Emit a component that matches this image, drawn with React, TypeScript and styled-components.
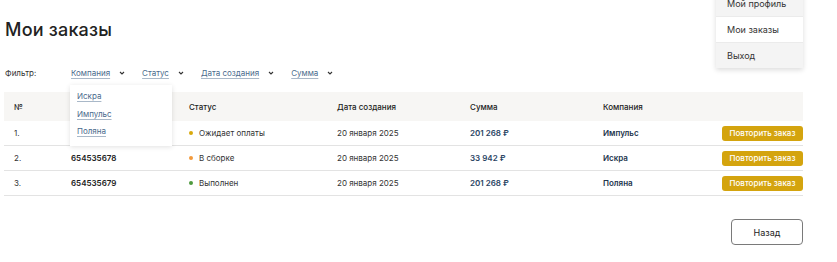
import React from 'react';
import styled, { createGlobalStyle } from 'styled-components';

const GlobalStyle = createGlobalStyle`
    html, body {
        margin: 0;
        padding: 0;
        background: #ffffff;
        font-family: "Inter", "Noto Sans", sans-serif;
        color: #222222;
    }
`;

interface Order {
    index: string;
    number: string;
    status: string;
    statusColor: string;
    date: string;
    sum: string;
    company: string;
}

const orders: Order[] = [
    { index: '1.', number: '654535677', status: 'Ожидает оплаты', statusColor: '#d8a90c', date: '20 января 2025', sum: '201 268 ₽', company: 'Импульс' },
    { index: '2.', number: '654535678', status: 'В сборке', statusColor: '#f39a3c', date: '20 января 2025', sum: '33 942 ₽', company: 'Искра' },
    { index: '3.', number: '654535679', status: 'Выполнен', statusColor: '#4e9a3e', date: '20 января 2025', sum: '201 268 ₽', company: 'Поляна' },
];

const Page = styled.div`
    position: relative;
    width: 837px;
    height: 262px;
    overflow: hidden;
    padding: 0 34px 0 4px;
    box-sizing: border-box;
`;

const Title = styled.h1`
    margin: 0;
    padding: 18px 0 0 1px;
    font-size: 18px;
    font-weight: 500;
    line-height: 24px;
    color: #222222;
    letter-spacing: 0.2px;
`;

const FilterBar = styled.div`
    display: flex;
    align-items: center;
    margin-top: 24px;
    height: 14px;
    font-size: 8px;
    position: relative;
`;

const FilterLabel = styled.span`
    width: 66px;
    padding-left: 1px;
    color: #333333;
`;

const FilterItem = styled.div`
    display: flex;
    align-items: center;
    gap: 9px;
    margin-right: 17px;
    color: #4a6a8c;
`;

const FilterText = styled.span`
    text-decoration: underline;
    text-decoration-color: #a9b8c8;
    text-underline-offset: 2px;
`;

const Chevron = () => (
    <svg width="6" height="4" viewBox="0 0 6 4">
        <path d="M1 1 L3 3 L5 1" stroke="#333" strokeWidth="1.1" fill="none" />
    </svg>
);

const CompanyMenu = styled.div`
    position: absolute;
    left: 66px;
    top: 19px;
    width: 102px;
    padding: 3px 0 5px;
    background: #ffffff;
    box-shadow: 0 1px 5px rgba(0, 0, 0, 0.12);
    z-index: 2;
    display: flex;
    flex-direction: column;
`;

const CompanyOption = styled.a`
    padding: 0 7px;
    height: 17.5px;
    line-height: 17.5px;
    font-size: 8px;
    color: #4a6a8c;
    text-decoration: underline;
    text-decoration-color: #a9b8c8;
    text-underline-offset: 2px;
`;

const Table = styled.div`
    margin-top: 12px;
    display: grid;
    grid-template-columns: 57px 118px 148px 133px 133px 1fr auto;
    font-size: 8px;
`;

const HeadCell = styled.div`
    background: #f7f6f4;
    height: 29px;
    display: flex;
    align-items: center;
    padding-left: 10px;
    font-weight: 500;
    color: #222222;
`;

const Cell = styled.div<{ $bold?: boolean; $color?: string; $last?: boolean }>`
    height: 24px;
    display: flex;
    align-items: center;
    padding-left: ${p => (p.$last ? '0' : '10px')};
    justify-content: ${p => (p.$last ? 'flex-end' : 'flex-start')};
    border-bottom: 1px solid #e3e3e3;
    font-weight: ${p => (p.$bold ? 600 : 400)};
    color: ${p => p.$color || '#333333'};
`;

const Dot = styled.span<{ $color: string }>`
    width: 4px;
    height: 4px;
    border-radius: 50%;
    background: ${p => p.$color};
    margin-right: 6px;
`;

const RepeatButton = styled.button`
    height: 15px;
    width: 81px;
    padding: 0;
    border: none;
    border-radius: 3px;
    background: #d4a40e;
    color: #ffffff;
    font-family: inherit;
    font-size: 8px;
    font-weight: 500;
    cursor: pointer;
`;

const Footer = styled.div`
    display: flex;
    justify-content: flex-end;
    margin-top: 23px;
`;

const BackButton = styled.button`
    width: 72px;
    height: 26px;
    border: 1px solid #7a7a7a;
    border-radius: 4px;
    background: #ffffff;
    font-family: inherit;
    font-size: 9px;
    color: #222222;
    cursor: pointer;
`;

const AccountMenu = styled.div`
    position: absolute;
    top: -9px;
    left: 716px;
    width: 87px;
    display: flex;
    flex-direction: column;
    box-shadow: 0 2px 5px rgba(0, 0, 0, 0.14);
    z-index: 3;
`;

const AccountItem = styled.div<{ $active?: boolean }>`
    height: 25px;
    line-height: 25px;
    padding-left: 11px;
    font-size: 9px;
    color: #333333;
    background: ${p => (p.$active ? '#ffffff' : '#f4f4f4')};
    border-bottom: 1px solid #ebebeb;
    &:last-child {
        border-bottom: none;
    }
`;

export default function App() {
    return (
        <Page>
            <GlobalStyle />
            <Title>Мои заказы</Title>
            <FilterBar>
                <FilterLabel>Фильтр:</FilterLabel>
                <FilterItem><FilterText>Компания</FilterText><Chevron /></FilterItem>
                <FilterItem><FilterText>Статус</FilterText><Chevron /></FilterItem>
                <FilterItem><FilterText>Дата создания</FilterText><Chevron /></FilterItem>
                <FilterItem><FilterText>Сумма</FilterText><Chevron /></FilterItem>
                <CompanyMenu>
                    <CompanyOption>Искра</CompanyOption>
                    <CompanyOption>Импульс</CompanyOption>
                    <CompanyOption>Поляна</CompanyOption>
                </CompanyMenu>
            </FilterBar>
            <Table>
                <HeadCell>№</HeadCell>
                <HeadCell></HeadCell>
                <HeadCell>Статус</HeadCell>
                <HeadCell>Дата создания</HeadCell>
                <HeadCell>Сумма</HeadCell>
                <HeadCell>Компания</HeadCell>
                <HeadCell></HeadCell>
                {orders.map(order => (
                    <React.Fragment key={order.number}>
                        <Cell>{order.index}</Cell>
                        <Cell $bold $color="#222222">{order.number}</Cell>
                        <Cell><Dot $color={order.statusColor} />{order.status}</Cell>
                        <Cell>{order.date}</Cell>
                        <Cell $bold $color="#2a4564">{order.sum}</Cell>
                        <Cell $bold $color="#22344c">{order.company}</Cell>
                        <Cell $last><RepeatButton>Повторить заказ</RepeatButton></Cell>
                    </React.Fragment>
                ))}
            </Table>
            <Footer>
                <BackButton>Назад</BackButton>
            </Footer>
            <AccountMenu>
                <AccountItem>Мой профиль</AccountItem>
                <AccountItem $active>Мои заказы</AccountItem>
                <AccountItem>Выход</AccountItem>
            </AccountMenu>
        </Page>
    );
}
